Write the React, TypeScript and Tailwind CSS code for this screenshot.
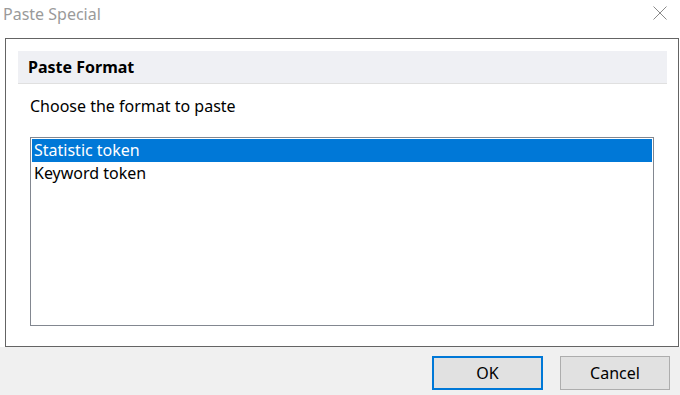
export default function App() {
  const rows = ['Statistic token', 'Keyword token']
  const selected = 0

  return (
    <div className="w-[680px] h-[395px] flex flex-col bg-white font-['Segoe_UI','Noto_Sans','Open_Sans',sans-serif] text-black">
      {/* Title bar */}
      <div className="h-[38px] flex items-start justify-between">
        <span className="pl-[3px] pt-[3px] text-[16px] leading-[22px] text-[#9a9a9a]">Paste Special</span>
        <svg width="14" height="14" viewBox="0 0 14 14" className="mt-[6px] mr-[13px]">
          <path d="M0.5 0.5 L13.5 13.5 M13.5 0.5 L0.5 13.5" stroke="#8a8a8a" strokeWidth="1" fill="none" />
        </svg>
      </div>

      {/* Content */}
      <div className="px-[5px] pr-[1px]">
        <div className="h-[309px] border border-[#646464] flex flex-col">
          <div className="mt-[12px] ml-[12px] mr-[11px] h-[33px] bg-[#eff0f4] border-b border-[#e0e0e0] flex items-center pl-[10px]">
            <span className="text-[16px] font-bold">Paste Format</span>
          </div>
          <div className="mt-[12px] ml-[24px] h-[20px] text-[16px] leading-[20px]">Choose the format to paste</div>
          <div className="mt-[21px] mx-[24px] h-[189px] border border-[#828790] p-[1px]">
            {rows.map((r, i) => (
              <div
                key={r}
                className={
                  i === selected
                    ? 'h-[23px] pl-[2px] bg-[#0078d7] text-white text-[16px] leading-[23px]'
                    : 'h-[23px] pl-[2px] text-[16px] leading-[23px]'
                }
              >
                {r}
              </div>
            ))}
          </div>
        </div>
      </div>

      {/* Button bar */}
      <div className="flex-1 bg-[#f0f0f0] flex justify-end items-start pt-[9px] pr-[10px] gap-[17px]">
        <button className="w-[111px] h-[34px] bg-[#e1e1e1] border-2 border-[#0078d7] text-[16px]">OK</button>
        <button className="w-[110px] h-[34px] bg-[#e1e1e1] border border-[#adadad] text-[16px]">Cancel</button>
      </div>
    </div>
  )
}
